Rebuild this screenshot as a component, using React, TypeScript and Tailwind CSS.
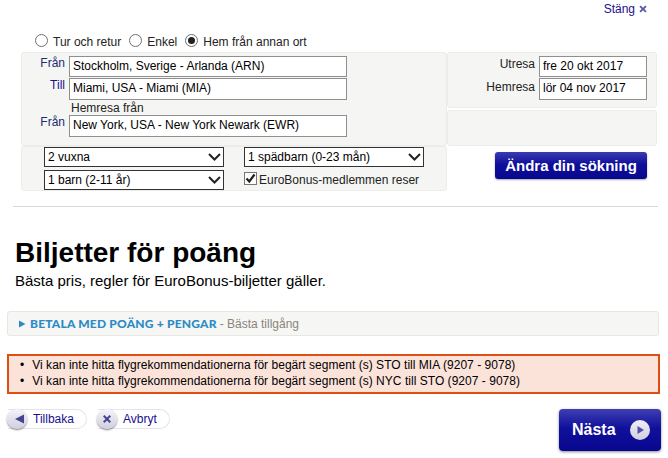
import { useState } from "react";

const airportInput =
  "w-[278px] border border-[#8f8f8f] bg-white pb-[2px] pl-[3px] text-[12px] text-black outline-none";
const dateInput =
  "w-[108px] border border-[#8f8f8f] bg-white pb-[2px] pl-[3px] text-[12px] text-black outline-none";
const panel = "rounded-[3px] border border-[#ecece8] bg-[#f5f5f3]";

function Radio({ label, checked, className }: { label: string; checked?: boolean; className?: string }) {
  return (
    <label className={`flex items-start gap-[5px] ${className ?? ""}`}>
      <span className="flex h-[13px] w-[13px] items-center justify-center rounded-full border border-[#6f6f6f] bg-white">
        {checked && <span className="h-[7px] w-[7px] rounded-full bg-[#222]" />}
      </span>
      <span className="mt-[1px]">{label}</span>
    </label>
  );
}

function RouteRow({ label, value, blue, height }: { label: string; value: string; blue?: boolean; height: string }) {
  return (
    <div className="flex items-start">
      <span className={`w-[41px] text-right ${blue ? "text-[#1a0f8f]" : "text-[#222c6e]"}`}>{label}</span>
      <input className={`${airportInput} ${height} ml-[4px]`} defaultValue={value} />
    </div>
  );
}

function PickSelect({ value }: { value: string }) {
  return (
    <div className="relative h-[20px] w-[180px]">
      <select
        className="h-full w-full appearance-none border border-[#333] bg-white pl-[3px] text-[12px] text-black outline-none"
        defaultValue={value}
      >
        <option>{value}</option>
      </select>
      <svg
        className="pointer-events-none absolute right-[3px] top-[6px]"
        width="13"
        height="8"
        viewBox="0 0 13 8"
        fill="none"
        stroke="#222"
        strokeWidth="2"
      >
        <path d="M1 1 6.5 6.5 12 1" />
      </svg>
    </div>
  );
}

function PillButton({ label, icon, width }: { label: string; icon: "back" | "cancel"; width: string }) {
  return (
    <button className={`relative flex h-[20px] items-center rounded-r-full border border-l-0 border-[#e4e4ee] bg-white text-[12px] text-[#1a0f8f] ${width}`}>
      <span className="absolute -left-[1px] top-[-1px] flex h-[20px] w-[20px] items-center justify-center rounded-full bg-[linear-gradient(#f4f4f9,#cfcfe0)] shadow-[0_1px_2px_#777]">
        {icon === "back" ? (
          <svg className="ml-[6px]" width="12" height="10" viewBox="0 0 12 10" fill="#45458f">
            <path d="M1 5 10 0.5v9z" />
          </svg>
        ) : (
          <svg width="10" height="10" viewBox="0 0 10 10" fill="#45458f">
            <path d="M2.4 1 5 3.6 7.6 1 9 2.4 6.4 5 9 7.6 7.6 9 5 6.4 2.4 9 1 7.6 3.6 5 1 2.4z" />
          </svg>
        )}
      </span>
      <span className="pl-[25px]">{label}</span>
    </button>
  );
}

export default function App() {
  const [member, setMember] = useState(true);

  return (
    <div className="h-[458px] w-[668px] overflow-hidden bg-white font-['Liberation_Sans',Arial,sans-serif] text-[12px] leading-[14px] text-[#222]">
      {/* close link */}
      <div className="flex h-[34px] items-start justify-end gap-[4px] pr-[21px] pt-[2px] text-[#1a0f8f]">
        <span>Stäng</span>
        <svg className="mt-[3px]" width="8" height="8" viewBox="0 0 10 10" fill="#5b5ba6">
          <path d="M2.2 0.5 5 3.3 7.8 0.5 9.5 2.2 6.7 5 9.5 7.8 7.8 9.5 5 6.7 2.2 9.5 0.5 7.8 3.3 5 0.5 2.2z" />
        </svg>
      </div>

      <div className="flex h-[18px] items-start pl-[35px]">
        <Radio label="Tur och retur" />
        <Radio label="Enkel" className="ml-[8px]" />
        <Radio label="Hem från annan ort" className="ml-[8px]" checked />
      </div>

      {/* search form */}
      <div className="flex pl-[21px]">
        <div className="w-[426px]">
          <div className={`${panel} h-[94px] pl-[2px] pt-[3px]`}>
            <div className="flex flex-col gap-[1px]">
              <RouteRow label="Från" value="Stockholm, Sverige - Arlanda (ARN)" height="h-[21px]" />
              <RouteRow label="Till" value="Miami, USA - Miami (MIA)" height="h-[22px]" blue />
            </div>
            <div className="h-[15px] pl-[47px] pt-[1px]">Hemresa från</div>
            <RouteRow label="Från" value="New York, USA - New York Newark (EWR)" height="h-[22px]" />
          </div>
          <div className={`${panel} grid h-[45px] grid-cols-[200px_180px] gap-y-[3px] pl-[22px]`}>
            <PickSelect value="2 vuxna" />
            <PickSelect value="1 spädbarn (0-23 mån)" />
            <PickSelect value="1 barn (2-11 år)" />
            <label className="flex items-center gap-[2px]" onClick={() => setMember(!member)}>
              <span className="-mt-[3px] flex h-[13px] w-[13px] items-center justify-center border border-[#777] bg-white">
                {member && (
                  <svg width="11" height="11" viewBox="0 0 11 11" fill="none" stroke="#222" strokeWidth="2.2">
                    <path d="M1.5 5.5 4.3 8.5 9.5 1.5" />
                  </svg>
                )}
              </span>
              <span>EuroBonus-medlemmen reser</span>
            </label>
          </div>
        </div>

        <div className="flex w-[210px] flex-col">
          <div className={`${panel} h-[56px] pr-[9px] pt-[3px]`}>
            <div className="flex flex-col items-end gap-[1px]">
              <div className="flex items-start gap-[4px]">
                <span className="mt-[1px]">Utresa</span>
                <input className={`${dateInput} h-[21px]`} defaultValue="fre 20 okt 2017" />
              </div>
              <div className="flex items-start gap-[4px]">
                <span className="mt-[2px]">Hemresa</span>
                <input className={`${dateInput} h-[22px]`} defaultValue="lör 04 nov 2017" />
              </div>
            </div>
          </div>
          <div className={`${panel} mt-[2px] h-[36px]`} />
          <div className="flex justify-end pr-[10px] pt-[6px]">
            <button className="h-[27px] w-[152px] rounded-[3px] bg-[linear-gradient(#3b3bb0,#0f0f9c_45%,#07078e)] text-[15px] font-bold text-white shadow-[0_1px_2px_#aaa]">
              Ändra din sökning
            </button>
          </div>
        </div>
      </div>

      <div className="ml-[13px] mt-[15px] w-[645px] border-t border-[#d8d8d8]" />

      <h1 className="pl-[15px] pt-[30px] text-[28px] font-bold leading-[31px] text-black">Biljetter för poäng</h1>
      <p className="pl-[15px] pt-[4px] text-[15px] leading-[17px] text-black">
        Bästa pris, regler för EuroBonus-biljetter gäller.
      </p>

      {/* payment option bar */}
      <div className="ml-[7px] mt-[22px] flex h-[25px] w-[652px] items-center rounded-[3px] border border-[#e6e6e2] bg-[#f6f6f4] pl-[10px]">
        <svg width="8" height="8" viewBox="0 0 8 8" fill="#2b8bc6">
          <path d="M1 0.5 7.5 4 1 7.5z" />
        </svg>
        <span className="ml-[4px] font-['Lato',sans-serif] text-[12px] font-black tracking-[0.2px] text-[#2b8bc6]">
          BETALA MED POÄNG + PENGAR
        </span>
        <span className="ml-[3px] text-[#8a857c]">- Bästa tillgång</span>
      </div>

      {/* errors */}
      <ul className="ml-[7px] mt-[18px] flex h-[40px] w-[653px] flex-col justify-center gap-[2px] border-2 border-[#e04e14] bg-[#fbe3da] pb-[2px] pl-[11px] tracking-[0.03px] text-black">
        <li className="flex gap-[8px]">
          <span>•</span>
          <span>Vi kan inte hitta flygrekommendationerna för begärt segment (s) STO till MIA (9207 - 9078)</span>
        </li>
        <li className="flex gap-[8px]">
          <span>•</span>
          <span>Vi kan inte hitta flygrekommendationerna för begärt segment (s) NYC till STO (9207 - 9078)</span>
        </li>
      </ul>

      {/* footer actions */}
      <div className="flex items-start justify-between pl-[8px] pr-[7px] pt-[15px]">
        <div className="flex gap-[11px]">
          <PillButton label="Tillbaka" icon="back" width="w-[79px]" />
          <PillButton label="Avbryt" icon="cancel" width="w-[72px]" />
        </div>
        <button className="flex h-[42px] w-[102px] items-center gap-[14px] rounded-[4px] bg-[linear-gradient(#3f3fb2,#10109c_45%,#07078e)] pl-[13px] text-[16px] font-bold text-white shadow-[0_1px_3px_#888]">
          <span>Nästa</span>
          <span className="flex h-[20px] w-[20px] items-center justify-center rounded-full bg-[linear-gradient(#f0f0f6,#cfcfe0)]">
            <svg width="10" height="10" viewBox="0 0 10 10" fill="#5050a8">
              <path d="M2.5 1 9 5 2.5 9z" />
            </svg>
          </span>
        </button>
      </div>
    </div>
  );
}
